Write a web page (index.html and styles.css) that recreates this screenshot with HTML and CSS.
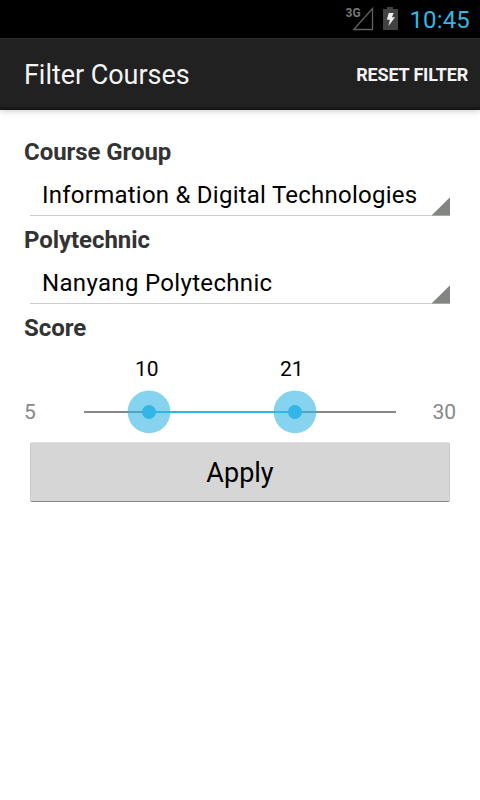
FILE: index.html
```html
<!DOCTYPE html>
<html lang="en">
<head>
<meta charset="utf-8">
<title>Filter Courses</title>
<link rel="stylesheet" href="styles.css">
</head>
<body>
<header class="status">
  <svg class="status-icons" width="56" height="38" viewBox="0 0 56 38" aria-hidden="true">
    <text class="network" x="1.500" y="16.800">3G</text>
    <path d="M9.800 29.500 28.500 8.500V29.500Z" fill="none" stroke="#606060" stroke-width="1.3"/>
    <path d="M43 7h6v2h5v21H39V9h4Z" fill="#424242"/>
    <path d="M44.700 13h5l-1.800 4.200h3.100L44.500 26l1.400-6.200h-3Z" fill="#eee"/>
  </svg>
  <span class="clock">10:45</span>
</header>
<div class="action-bar">
  <h1 class="title">Filter Courses</h1>
  <button class="reset">RESET FILTER</button>
</div>
<main class="content">
  <section class="field">
    <h2 class="label">Course Group</h2>
    <div class="spinner"><span class="value value-group">Information &amp; Digital Technologies</span><svg class="corner" width="18" height="19"><path d="M0 18 18 .3V18.500H0Z" fill="#838583"/></svg></div>
  </section>
  <section class="field">
    <h2 class="label">Polytechnic</h2>
    <div class="spinner"><span class="value value-poly">Nanyang Polytechnic</span><svg class="corner" width="18" height="19"><path d="M0 18 18 .3V18.500H0Z" fill="#838583"/></svg></div>
  </section>
  <section class="score">
    <h2 class="label">Score</h2>
    <div class="range">
      <span class="limit">5</span>
      <div class="slider">
        <div class="numbers"><span>10</span><span>21</span></div>
        <svg class="track" width="312" height="44" viewBox="0 0 312 44">
          <path d="M0 22H312" stroke="#888" stroke-width="2"/>
          <path d="M65 22H211" stroke="#33b5e5" stroke-width="2"/>
          <g fill="#33b5e5">
            <circle cx="65" cy="21.800" r="21.400" opacity=".6"/><circle cx="65" cy="22" r="7"/>
            <circle cx="211" cy="21.800" r="21.400" opacity=".6"/><circle cx="211" cy="22" r="7"/>
          </g>
        </svg>
      </div>
      <span class="limit limit-max">30</span>
    </div>
  </section>
  <button class="apply">Apply</button>
</main>
</body>
</html>
```
FILE: styles.css
```css
* { box-sizing: border-box; }
body { margin: 0; min-height: 800px; background: #fff; font-family: Roboto, sans-serif; color: #000; }
h1, h2 { margin: 0; }
button { border: 0; margin: 0; padding: 0; background: none; font-family: inherit; }

.status { height: 38px; background: #000; display: flex; justify-content: flex-end; padding-right: 10px; }
.status-icons { margin-right: 9px; }
.network { font: bold 12px Roboto, sans-serif; fill: #777; }
.clock { font-size: 24px; line-height: 40px; color: #33b5e5; letter-spacing: .15px; }

.action-bar { height: 72px; background: #212121; border-top: 1px solid #2c2c2c; border-bottom: 3px solid #171717; box-shadow: 0 1px 6px rgba(60, 30, 40, .25); display: flex; align-items: center; justify-content: space-between; padding: 3px 12px 0 24px; }
.title { font-size: 27px; font-weight: 400; line-height: 36px; letter-spacing: -.05px; color: #f3f3f3; }
.reset { font-size: 18px; font-weight: 700; line-height: 24px; letter-spacing: -.18px; color: #f3f3f3; }

.content { padding: 26px 24px 0; }
.field { height: 88px; }
.label { font-size: 24px; font-weight: 700; line-height: 32px; letter-spacing: -.06px; color: #333; }
.spinner { height: 48px; margin: 0 6px; padding: 7px 0 0 12px; border-bottom: 1px solid #ccc; position: relative; }
.value { font-size: 24px; line-height: 40px; white-space: nowrap; }
.value-group { letter-spacing: .24px; }
.value-poly { letter-spacing: .33px; }
.corner { position: absolute; right: 0; bottom: -1px; }

.range { display: flex; justify-content: space-between; height: 90px; }
.limit { width: 60px; padding-top: 54px; font-size: 21px; line-height: 28px; color: #888; }
.limit-max { text-align: right; }
.slider { width: 312px; padding-top: 12px; }
.numbers { display: flex; height: 26px; line-height: 26px; font-size: 21px; padding-left: 51px; gap: 121px; }
.numbers span { width: 24px; }
.track { display: block; margin-top: 8px; }

.apply { display: block; width: 420px; height: 60px; margin: 8px 6px 0; padding-top: 1px; background: #d6d6d6; border: 1px solid #cacaca; border-top-color: #dfdfdf; border-bottom-color: #888; border-radius: 2px; font-size: 27px; color: #000; }
```
